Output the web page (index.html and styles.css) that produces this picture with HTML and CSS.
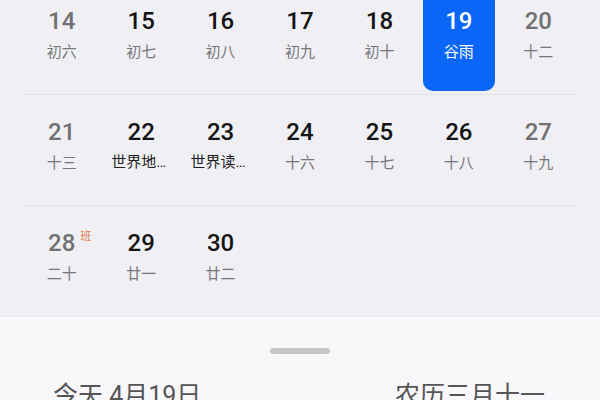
FILE: index.html
```html
<!DOCTYPE html>
<html lang="zh-CN">
<head>
<meta charset="utf-8">
<link rel="stylesheet" href="styles.css">
</head>
<body>
<div class="page">
  <div class="month">
    <div class="week">
      <div class="day off"><span class="num">14</span><span class="lunar">初六</span></div>
      <div class="day"><span class="num">15</span><span class="lunar">初七</span></div>
      <div class="day"><span class="num">16</span><span class="lunar">初八</span></div>
      <div class="day"><span class="num">17</span><span class="lunar">初九</span></div>
      <div class="day"><span class="num">18</span><span class="lunar">初十</span></div>
      <div class="day selected"><span class="num">19</span><span class="lunar">谷雨</span></div>
      <div class="day off"><span class="num">20</span><span class="lunar">十二</span></div>
    </div>
    <div class="week">
      <div class="day off"><span class="num">21</span><span class="lunar">十三</span></div>
      <div class="day"><span class="num">22</span><span class="lunar event">世界地球日</span></div>
      <div class="day"><span class="num">23</span><span class="lunar event">世界读书日</span></div>
      <div class="day"><span class="num">24</span><span class="lunar">十六</span></div>
      <div class="day"><span class="num">25</span><span class="lunar">十七</span></div>
      <div class="day"><span class="num">26</span><span class="lunar">十八</span></div>
      <div class="day off"><span class="num">27</span><span class="lunar">十九</span></div>
    </div>
    <div class="week last">
      <div class="day off"><span class="num">28<span class="badge">班</span></span><span class="lunar">二十</span></div>
      <div class="day"><span class="num">29</span><span class="lunar">廿一</span></div>
      <div class="day"><span class="num">30</span><span class="lunar">廿二</span></div>
      <div class="day empty"></div>
      <div class="day empty"></div>
      <div class="day empty"></div>
      <div class="day empty"></div>
    </div>
  </div>
  <div class="sheet">
    <div class="handle"></div>
    <div class="today">
      <span>今天 4月19日</span>
      <span>农历三月十一</span>
    </div>
  </div>
</div>
</body>
</html>
```

FILE: styles.css
```css
html, body {
  margin: 0;
  padding: 0;
  background: #f0f0f4;
  overflow: hidden;
}
body {
  width: 600px;
  height: 400px;
  font-family: Roboto, "Noto Sans CJK SC", sans-serif;
}
.page {
  width: 600px;
  height: 400px;
  display: flex;
  flex-direction: column;
  overflow: hidden;
}
.month {
  margin: -16px 22px 0;
}
.week {
  display: grid;
  grid-template-columns: repeat(7, 1fr);
  height: 111px;
  box-sizing: border-box;
  border-bottom: 1px solid #e2e2e7;
}
.week.last {
  border-bottom: none;
}
.day {
  display: flex;
  flex-direction: column;
  align-items: center;
  margin: 4px 4px 3px;
  border-radius: 10px;
  padding-top: 18px;
}
.num {
  position: relative;
  font-size: 24px;
  line-height: 30px;
  font-weight: 500;
  color: #141414;
}
.off .num {
  color: #717173;
}
.lunar {
  margin-top: 5px;
  font-size: 15px;
  line-height: 20px;
  color: #77777a;
  font-family: "Noto Sans CJK SC", sans-serif;
  white-space: nowrap;
}
.lunar.event {
  font-family: Roboto, "Noto Sans CJK SC", sans-serif;
  color: #1c1c1c;
  max-width: 60px;
  overflow: hidden;
  text-overflow: ellipsis;
}
.selected {
  background: #0a66f6;
}
.selected .num,
.selected .lunar {
  color: #ffffff;
}
.badge {
  position: absolute;
  left: 100%;
  top: 0;
  margin-left: 5px;
  font-size: 11px;
  line-height: 14px;
  font-weight: 400;
  color: #e07c4f;
  font-family: "Noto Sans CJK SC", sans-serif;
}
.sheet {
  flex: 1;
  background: #f8f8fa;
  display: flex;
  flex-direction: column;
  align-items: center;
  padding-top: 31px;
  box-shadow: 0 -1px 2px rgba(0, 0, 0, 0.03);
}
.handle {
  width: 60px;
  height: 6px;
  border-radius: 3px;
  background: #c6c6c8;
}
.today {
  align-self: stretch;
  display: flex;
  justify-content: space-between;
  padding: 0 55px 0 53px;
  margin-top: 25px;
  font-family: Roboto, "Noto Sans CJK SC", sans-serif;
  font-size: 25px;
  line-height: 34px;
  color: #555557;
}
```
